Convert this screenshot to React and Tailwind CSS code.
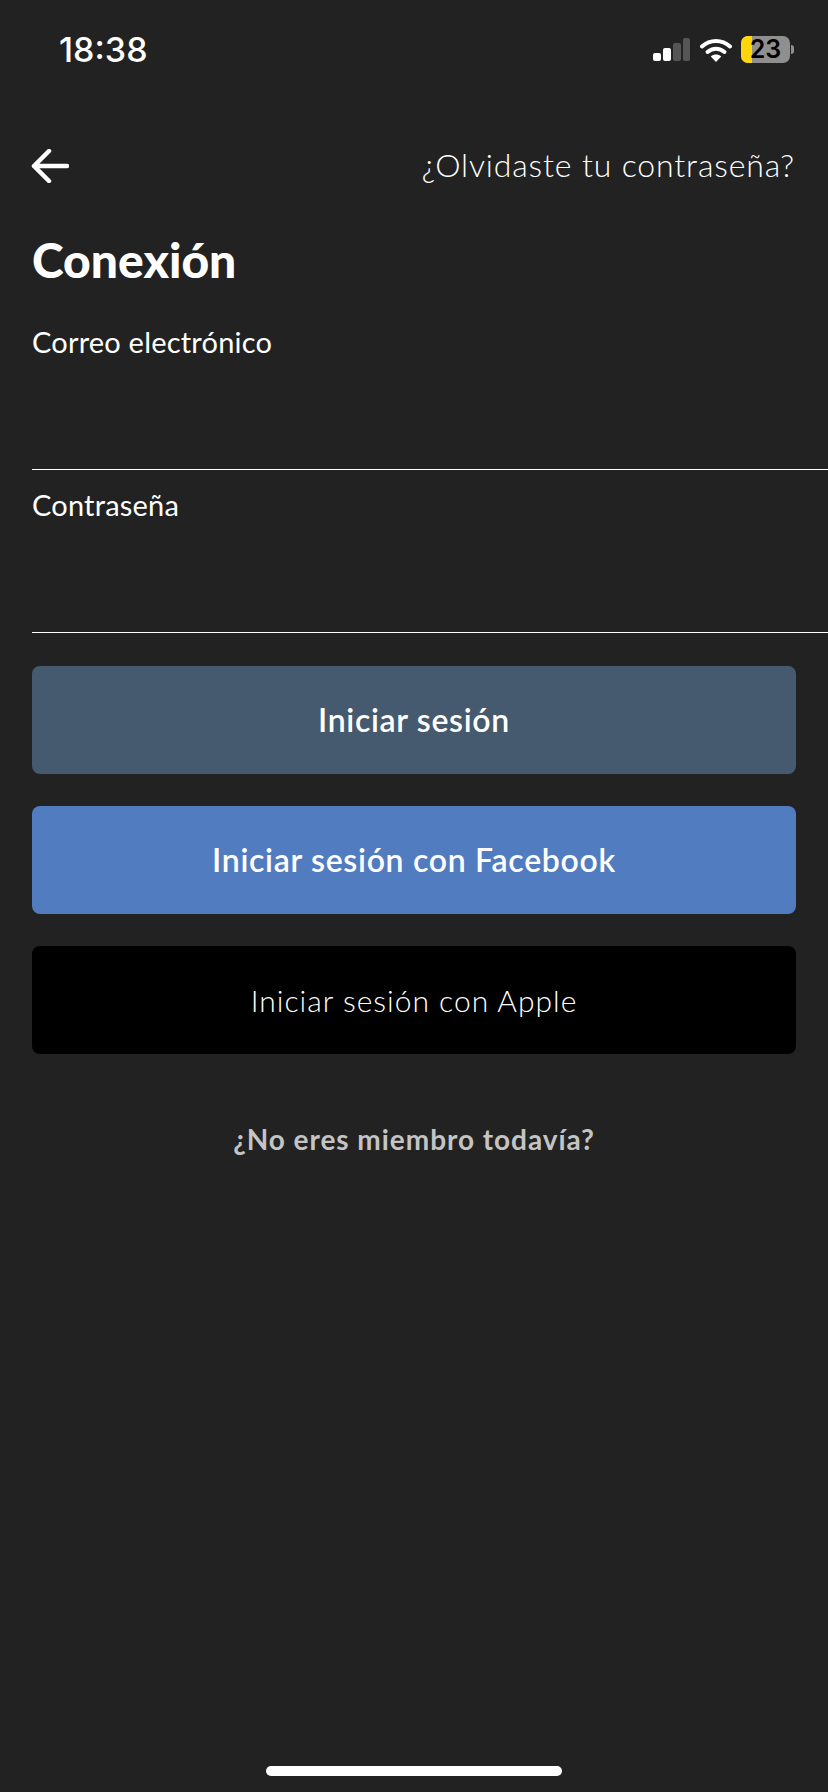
import React from "react";

const SignalIcon = () => (
  <svg width="37" height="23" viewBox="0 0 37 23" fill="none">
    <rect x="0" y="15" width="8" height="8" rx="2" fill="#fff" />
    <rect x="10" y="10" width="8" height="13" rx="2" fill="#fff" />
    <rect x="20" y="5" width="8" height="18" rx="2" fill="#555" />
    <rect x="30" y="0" width="7" height="23" rx="2" fill="#555" />
  </svg>
);

const WifiIcon = () => (
  <svg width="32" height="24" viewBox="0 0 32 24" fill="none">
    <path d="M2 8.5C10 1 22 1 30 8.5" stroke="#fff" strokeWidth="4" strokeLinecap="round" />
    <path d="M7.5 14C12.5 9.5 19.5 9.5 24.5 14" stroke="#fff" strokeWidth="4" strokeLinecap="round" />
    <path d="M16 24L10.8 18.4C13.8 15.8 18.2 15.8 21.2 18.4L16 24Z" fill="#fff" />
  </svg>
);

const Battery = () => (
  <div className="flex items-center">
    <div className="relative w-[49px] h-[27px] rounded-[7px] bg-[#8f8f8f] flex items-center justify-center">
      <div className="absolute left-0 top-0 bottom-0 w-[11px] rounded-l-[7px] bg-[#ffd60a]" />
      <span className="relative text-[25px] leading-[27px] font-semibold text-black font-['Inter',sans-serif]">23</span>
    </div>
    <div className="ml-[1px] w-[3px] h-[9px] rounded-r-full bg-[#8f8f8f]" />
  </div>
);

const Field = ({ label }) => (
  <div className="ml-8 h-[163px] border-b border-white flex flex-col justify-end">
    <div className="text-[29px] leading-[34px] tracking-[0.2px] text-white mb-[110px]">{label}</div>
  </div>
);

const Button = ({ className, children }) => (
  <button type="button" className={`w-full h-[108px] rounded-lg text-white flex items-center justify-center ${className}`}>
    {children}
  </button>
);

const App = () => {
  return (
    <div className="w-[828px] h-[1792px] bg-[#222222] text-white flex flex-col font-['Lato',sans-serif]">
      <div className="h-[133px] pl-[59px] pr-[34px] pt-[29px] flex items-start justify-between">
        <span className="text-[34px] leading-[42px] font-medium font-['Inter',sans-serif]">18:38</span>
        <div className="flex items-center pt-[7px]">
          <div className="mr-[10px] flex"><SignalIcon /></div>
          <div className="mr-[9px] flex"><WifiIcon /></div>
          <Battery />
        </div>
      </div>

      <div className="h-[66px] pl-[31px] pr-[33px] flex items-center justify-between">
        <svg width="38" height="34" viewBox="0 0 38 34" fill="none">
          <path d="M36 17H3M18 2L3 17L18 32" stroke="#fff" strokeWidth="4.5" strokeLinecap="round" strokeLinejoin="round" />
        </svg>
        <span className="pb-[2px] text-[32px] font-light tracking-[0.85px]">¿Olvidaste tu contraseña?</span>
      </div>

      <h1 className="pl-8 mt-[33px] text-[48px] leading-[56px] font-black">Conexión</h1>

      <div className="mt-[19px]">
        <Field label="Correo electrónico" />
        <Field label="Contraseña" />
      </div>

      <div className="mx-8 mt-[33px] flex flex-col gap-8">
        <Button className="bg-[#455a6e] text-[32px] font-semibold tracking-[0.68px]">Iniciar sesión</Button>
        <Button className="bg-[#527cc0] text-[32px] font-semibold tracking-[0.7px]">Iniciar sesión con Facebook</Button>
        <Button className="bg-black text-[30px] font-light tracking-[1px]">Iniciar sesión con Apple</Button>
      </div>

      <div className="mt-[64px] text-center text-[28px] font-bold text-[#c4c4c4] tracking-[0.95px]">¿No eres miembro todavía?</div>

      <div className="mt-auto mb-[16px] mx-auto w-[296px] h-[10px] rounded-full bg-white" />
    </div>
  );
};

export default App;
